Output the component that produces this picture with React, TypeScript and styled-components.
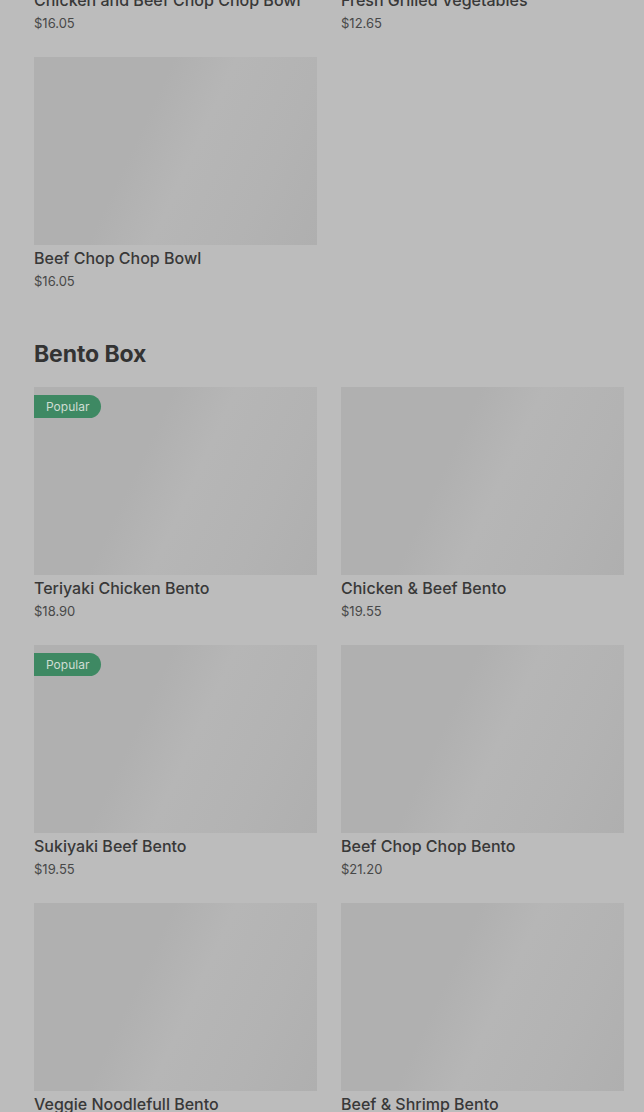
import React from "react";
import styled, { createGlobalStyle } from "styled-components";

const Global = createGlobalStyle`
  html, body { margin: 0; padding: 0; background: #bcbcbc; }
  body { font-family: Inter, "Noto Sans", Roboto, sans-serif; overflow: hidden; }
`;

const Page = styled.div`
  margin-top: -201px;
  padding: 0 20px 0 34px;
  display: flex;
  flex-direction: column;
  gap: 49px;
`;

const Section = styled.section`
  display: flex;
  flex-direction: column;
  gap: 19px;
`;

const SectionTitle = styled.h2`
  margin: 0;
  font-size: 23px;
  line-height: 28px;
  font-weight: 700;
  color: #333333;
  letter-spacing: -0.1px;
`;

const Grid = styled.div`
  display: grid;
  grid-template-columns: repeat(2, 283px);
  column-gap: 24px;
  row-gap: 24px;
`;

const Card = styled.div`
  display: flex;
  flex-direction: column;
`;

const Thumb = styled.div`
  position: relative;
  height: 188px;
  background: linear-gradient(
    115deg,
    #b0b0b0 0%,
    #b0b0b0 38%,
    #b6b6b6 55%,
    #b3b3b3 78%,
    #afafaf 100%
  );
`;

const Badge = styled.span`
  position: absolute;
  top: 8px;
  left: 0;
  height: 23px;
  padding: 0 12px;
  display: flex;
  align-items: center;
  background: #3e8963;
  color: #cfddd3;
  font-size: 12px;
  border-radius: 0 12px 12px 0;
`;

const Name = styled.div`
  margin-top: 3px;
  font-size: 16px;
  line-height: 20px;
  font-weight: 500;
  color: #383838;
  white-space: nowrap;
`;

const Price = styled.div`
  margin-top: 3px;
  font-size: 13px;
  line-height: 20px;
  color: #484848;
`;

type Item = { name: string; price: string; popular?: boolean };

const bowls: Item[] = [
  { name: "Chicken and Beef Chop Chop Bowl", price: "$16.05" },
  { name: "Fresh Grilled Vegetables", price: "$12.65" },
  { name: "Beef Chop Chop Bowl", price: "$16.05" },
];

const bento: Item[] = [
  { name: "Teriyaki Chicken Bento", price: "$18.90", popular: true },
  { name: "Chicken & Beef Bento", price: "$19.55" },
  { name: "Sukiyaki Beef Bento", price: "$19.55", popular: true },
  { name: "Beef Chop Chop Bento", price: "$21.20" },
  { name: "Veggie Noodlefull Bento", price: "$18.90" },
  { name: "Beef & Shrimp Bento", price: "$19.55" },
];

const MenuCard = ({ item }: { item: Item }) => (
  <Card>
    <Thumb>{item.popular && <Badge>Popular</Badge>}</Thumb>
    <Name>{item.name}</Name>
    <Price>{item.price}</Price>
  </Card>
);

export default function App() {
  return (
    <>
      <Global />
      <Page>
        <Section>
          <Grid>
            {bowls.map((b) => (
              <MenuCard key={b.name} item={b} />
            ))}
          </Grid>
        </Section>
        <Section>
          <SectionTitle>Bento Box</SectionTitle>
          <Grid>
            {bento.map((b) => (
              <MenuCard key={b.name} item={b} />
            ))}
          </Grid>
        </Section>
      </Page>
    </>
  );
}
